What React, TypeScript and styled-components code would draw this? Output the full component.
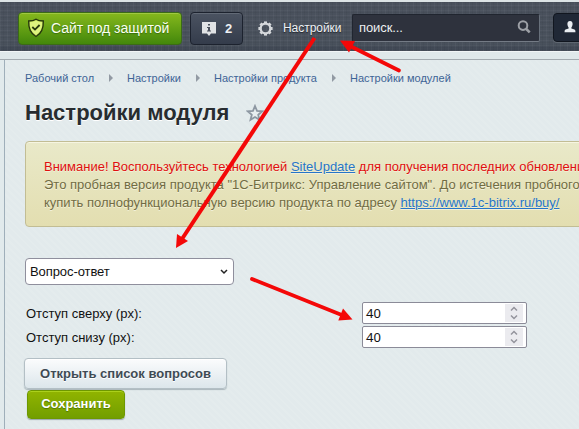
import React from "react";
import styled, { createGlobalStyle } from "styled-components";

const GlobalStyle = createGlobalStyle`
  * { box-sizing: border-box; }
  html, body { margin: 0; padding: 0; overflow: hidden; }
  body { font-family: "Liberation Sans", Arial, sans-serif; background: #e1eaec; }
`;

const Page = styled.div`
  position: relative;
  width: 579px;
  height: 429px;
  overflow: hidden;
  display: flex;
  flex-direction: column;
  background: #e1eaec;
`;

const Header = styled.header`
  height: 51px;
  flex: none;
  display: flex;
  align-items: flex-start;
  padding: 10px 0 0 18px;
  border-top: 2px solid #dce3e5;
  background:
    repeating-linear-gradient(90deg, rgba(255,255,255,0.035) 0 1px, transparent 1px 3px, rgba(0,0,0,0.04) 3px 4px, transparent 4px 7px),
    repeating-linear-gradient(0deg, rgba(255,255,255,0.03) 0 1px, transparent 1px 3px, rgba(0,0,0,0.04) 3px 4px, transparent 4px 5px),
    linear-gradient(#4a515d, #49515c 85%, #3e4652);
`;

const ProtectButton = styled.button`
  width: 164px;
  height: 33px;
  flex: none;
  display: flex;
  align-items: center;
  padding: 0 0 1px 8px;
  gap: 6px;
  border: 1px solid #3b6b16;
  border-radius: 4px;
  background: linear-gradient(#86b81d, #64a014 50%, #43870b);
  box-shadow: inset 0 1px 0 #a0c842;
  color: #fbfff0;
  font: 14px "Liberation Sans", Arial, sans-serif;
  letter-spacing: -0.02px;
  white-space: nowrap;
  text-shadow: 0 1px 1px #39700d;
`;

const InfoButton = styled.button`
  width: 53px;
  height: 33px;
  flex: none;
  display: flex;
  align-items: center;
  gap: 9px;
  margin-left: 8px;
  padding: 0 0 1px 11px;
  border: 1px solid #1c222e;
  border-radius: 4px;
  background: linear-gradient(#4b5361, #343c4b);
  box-shadow: inset 0 1px 0 #626a76;
  color: #eef1f4;
  font: bold 13px "Liberation Sans", Arial, sans-serif;
`;

const SettingsLink = styled.div`
  display: flex;
  align-items: center;
  gap: 10px;
  width: 94px;
  height: 32px;
  margin-left: 15px;
  flex: none;
  color: #eef1f4;
  font-size: 12px;
  letter-spacing: -0.05px;
  text-shadow: 0 1px 1px #22262e;
`;

const Search = styled.div`
  width: 188px;
  height: 28px;
  flex: none;
  display: flex;
  align-items: center;
  justify-content: space-between;
  margin: 2px 0 0 0;
  padding: 0 8px 2px 6px;
  border: 1px solid #20252f;
  border-right-color: #68707b;
  border-bottom-color: #747b85;
  border-radius: 2px;
  background: #2e323d;
  color: #eceef0;
  font-size: 13px;
  letter-spacing: -0.1px;
`;

const UserButton = styled.button`
  width: 60px;
  height: 29px;
  flex: none;
  display: flex;
  align-items: center;
  margin: 1px 0 0 13px;
  padding: 0 0 2px 10px;
  border: 1px solid #11161f;
  border-radius: 4px;
  background: #202836;
  box-shadow: 0 1px 0 #5f6771;
`;

const SubBar = styled.div`
  height: 9px;
  flex: none;
  background: #dfe8ea;
  border-bottom: 1px solid #a3abb0;
  border-top: 1px solid #f1f5f6;
`;

const Main = styled.main`
  flex: 1;
  min-height: 0;
  margin-left: 4px;
  padding-left: 20px;
  border-left: 1px solid #9fafba;
  background: repeating-linear-gradient(45deg, rgba(255,255,255,0.08) 0 2px, transparent 2px 5px), #e2eaec;
`;

const Breadcrumbs = styled.nav`
  display: flex;
  align-items: center;
  height: 14px;
  margin-top: 11px;
  font-size: 11px;
  color: #3e6496;
  white-space: nowrap;
`;

const Crumb = styled.span<{ $width: number }>`
  width: ${(p) => p.$width}px;
  flex: none;
`;

const Chevron = styled.span`
  width: 0;
  height: 0;
  margin: 0 14px 1px 15px;
  border: 4px solid transparent;
  border-left-color: #929aa3;
  border-right-width: 0;
  flex: none;
`;

const TitleRow = styled.div`
  display: flex;
  align-items: center;
  height: 30px;
  margin-top: 13px;
`;

const Title = styled.h1`
  width: 221px;
  margin: 0;
  color: #272c30;
  font-size: 22px;
  line-height: 30px;
  white-space: nowrap;
  text-shadow: 0 1px 0 #fff;
`;

const Notice = styled.section`
  width: 590px;
  height: 86px;
  margin-top: 13px;
  padding: 16px 18px;
  border: 1px solid #c2bd94;
  border-radius: 4px;
  background: linear-gradient(#e9e9c9, #e3deb0);
  box-shadow: inset 0 1px 0 #f6f5e2;
  color: #716c43;
  font-size: 13px;
  line-height: 18px;
  white-space: nowrap;
  text-shadow: 0 1px 0 #f3f1d9;
`;

const NoticeLine = styled.div<{ $alert?: boolean }>`
  color: ${(p) => (p.$alert ? "#e00f0f" : "inherit")};
`;

const Link = styled.a`
  color: #2675c8;
  text-decoration: underline;
`;

const Select = styled.div`
  display: flex;
  align-items: center;
  justify-content: space-between;
  width: 209px;
  height: 27px;
  margin-top: 31px;
  padding: 0 5px 0 4px;
  border: 1px solid #8f8f9d;
  border-radius: 4px;
  background: #fff;
  color: #111;
  font-size: 13px;
  letter-spacing: -0.08px;
`;

const Fields = styled.div`
  display: flex;
  flex-direction: column;
  gap: 2px;
  margin-top: 17px;
`;

const Field = styled.label`
  display: flex;
  align-items: center;
  height: 22px;
  color: #111;
  font-size: 13px;
`;

const FieldLabel = styled.span`
  width: 337px;
  padding-left: 1px;
`;

const NumberBox = styled.span`
  width: 165px;
  height: 22px;
  display: flex;
  align-items: center;
  justify-content: space-between;
  padding: 0 3px 0 3px;
  border: 1px solid #8b8b98;
  border-radius: 2px;
  background: #fff;
  font: 13px "Noto Sans", "DejaVu Sans", sans-serif;
`;

const Spinner = styled.span`
  width: 18px;
  height: 18px;
  display: flex;
  align-items: center;
  justify-content: center;
  background: #ebebef;
`;

const Actions = styled.div`
  display: flex;
  flex-direction: column;
  align-items: flex-start;
  margin: 10px 0 0 -1px;
`;

const ListButton = styled.button`
  width: 203px;
  height: 31px;
  padding: 0 0 1px;
  border: 1px solid #b3bfc5;
  border-radius: 4px;
  background: linear-gradient(#fbfcfd, #dce6eb);
  box-shadow: 0 1px 1px #aab6bc, inset 0 1px 0 #fff;
  color: #3f4b54;
  font: bold 13px "Liberation Sans", Arial, sans-serif;
  white-space: nowrap;
  text-shadow: 0 1px 0 #fff;
`;

const SaveButton = styled.button`
  width: 98px;
  height: 29px;
  margin: 1px 0 0 3px;
  padding: 0 0 2px;
  border: 1px solid #6e9800;
  border-radius: 4px;
  background: linear-gradient(#91b400, #729e00);
  box-shadow: 0 1px 1px #9aa7ad, inset 0 1px 0 #abd01b;
  color: #fff;
  font: bold 13px "Liberation Sans", Arial, sans-serif;
  text-shadow: 0 1px 1px #4f7500;
`;

const Annotations = styled.svg`
  position: absolute;
  inset: 0;
  pointer-events: none;
`;

const ShieldIcon = () => (
  <svg width="18" height="20" viewBox="0 0 18 20">
    <path d="M9 1.2 C7 2.6 4.3 3 1.7 3 C1.4 9.5 2.7 15 9 18.5 C15.3 15 16.6 9.5 16.3 3 C13.7 3 11 2.6 9 1.2Z" fill="#cdea5c" stroke="#26370d" strokeWidth="1.4" />
    <path d="M3 4.3 C5.5 4.2 7.5 3.7 9 2.8 C10.5 3.7 12.5 4.2 15 4.3 C15 10 13.8 13.5 9 16.8 C4.2 13.5 3 10 3 4.3Z" fill="#def37f" />
    <path d="M5.3 9 L8 11.6 L12.6 7" fill="none" stroke="#26370d" strokeWidth="1.8" />
  </svg>
);

const InfoIcon = () => (
  <svg width="14" height="15" viewBox="0 0 14 15">
    <path d="M0 1 H14 V12.5 H9 L7 15 L5 12.5 H0Z" fill="#e1e3e5" />
    <path d="M6 3 H8 V4.6 H6Z M5 6 H8 V9.5 H9 V10.6 H5 V9.5 H6 V7 H5Z" fill="#4a505c" />
  </svg>
);

const GearIcon = () => (
  <svg width="15" height="15" viewBox="0 0 15 15">
    <circle cx="7.5" cy="7.5" r="4.8" fill="none" stroke="#d5d8db" strokeWidth="2.2" />
    {[0, 45, 90, 135, 180, 225, 270, 315].map((a) => (
      <rect key={a} x="6" y="0.4" width="3" height="2.2" fill="#d5d8db" transform={`rotate(${a} 7.5 7.5)`} />
    ))}
  </svg>
);

const SearchIcon = () => (
  <svg width="14" height="14" viewBox="0 0 14 14" fill="none" stroke="#9da0a6">
    <circle cx="6" cy="5.6" r="4.3" strokeWidth="2" />
    <path d="M9 8.8 L12.7 12.4" strokeWidth="2.6" />
  </svg>
);

const UserIcon = () => (
  <svg width="12" height="12" viewBox="0 0 12 12" fill="#e9edf1">
    <path d="M6 0 C8 0 8.7 1.4 8.6 3.2 C8.5 4.8 7.8 5.7 7.4 6.4 V7.6 L10.5 8.6 Q11.5 9 11.5 11.2 H0.5 Q0.5 9 1.5 8.6 L4.6 7.6 V6.4 C4.2 5.7 3.5 4.8 3.4 3.2 C3.3 1.4 4 0 6 0Z" />
  </svg>
);

const StarIcon = () => (
  <svg width="18" height="18" viewBox="0 0 18 18">
    <path d="M9 2 L11 6.9 L16.2 7.3 L12.2 10.7 L13.5 15.8 L9 13 L4.5 15.8 L5.8 10.7 L1.8 7.3 L7 6.9Z" fill="#e8eef0" stroke="#8d97a2" strokeWidth="1.8" />
  </svg>
);

const NumberField = ({ label, value }: { label: string; value: string }) => (
  <Field>
    <FieldLabel>{label}</FieldLabel>
    <NumberBox>
      {value}
      <Spinner>
        <svg width="8" height="14" viewBox="0 0 8 14" fill="none" stroke="#94949c" strokeWidth="1.5">
          <path d="M1 4.5 L4 1.5 L7 4.5 M1 9.5 L4 12.5 L7 9.5" />
        </svg>
      </Spinner>
    </NumberBox>
  </Field>
);

export default function App() {
  return (
    <Page>
      <GlobalStyle />
      <Header>
        <ProtectButton><ShieldIcon />Сайт под защитой</ProtectButton>
        <InfoButton><InfoIcon />2</InfoButton>
        <SettingsLink><GearIcon />Настройки</SettingsLink>
        <Search>поиск...<SearchIcon /></Search>
        <UserButton><UserIcon /></UserButton>
      </Header>
      <SubBar />
      <Main>
        <Breadcrumbs>
          <Crumb $width={69}>Рабочий стол</Crumb><Chevron />
          <Crumb $width={54}>Настройки</Crumb><Chevron />
          <Crumb $width={103}>Настройки продукта</Crumb><Chevron />
          <Crumb $width={101}>Настройки модулей</Crumb>
        </Breadcrumbs>
        <TitleRow><Title>Настройки модуля</Title><StarIcon /></TitleRow>
        <Notice>
          <NoticeLine $alert>Внимание! Воспользуйтесь технологией <Link>SiteUpdate</Link> для получения последних обновлений.</NoticeLine>
          <NoticeLine>Это пробная версия продукта "1С-Битрикс: Управление сайтом". До истечения пробного</NoticeLine>
          <NoticeLine>купить полнофункциональную версию продукта по адресу <Link>https://www.1c-bitrix.ru/buy/</Link></NoticeLine>
        </Notice>
        <Select>
          Вопрос-ответ
          <svg width="8" height="6" viewBox="0 0 8 6" fill="none" stroke="#222" strokeWidth="1.5"><path d="M1 1 L4 4 L7 1" /></svg>
        </Select>
        <Fields>
          <NumberField label="Отступ сверху (px):" value="40" />
          <NumberField label="Отступ снизу (px):" value="40" />
        </Fields>
        <Actions>
          <ListButton>Открыть список вопросов</ListButton>
          <SaveButton>Сохранить</SaveButton>
        </Actions>
      </Main>
      <Annotations width="579" height="429" viewBox="0 0 579 429" stroke="#f40808" fill="#f40808">
        <path d="M314.5 38 L182 239" strokeWidth="4" />
        <path d="M176 248 L177 234 L188 241Z" stroke="none" />
        <path d="M399 70.5 L350 46" strokeWidth="3.8" strokeLinecap="round" />
        <path d="M340 40.5 L355 41 L349 52.5Z" stroke="none" />
        <path d="M252 279 L343 315.5" strokeWidth="3.8" strokeLinecap="round" />
        <path d="M352.5 319.5 L343 308.5 L338.3 320.5Z" stroke="none" />
      </Annotations>
    </Page>
  );
}
